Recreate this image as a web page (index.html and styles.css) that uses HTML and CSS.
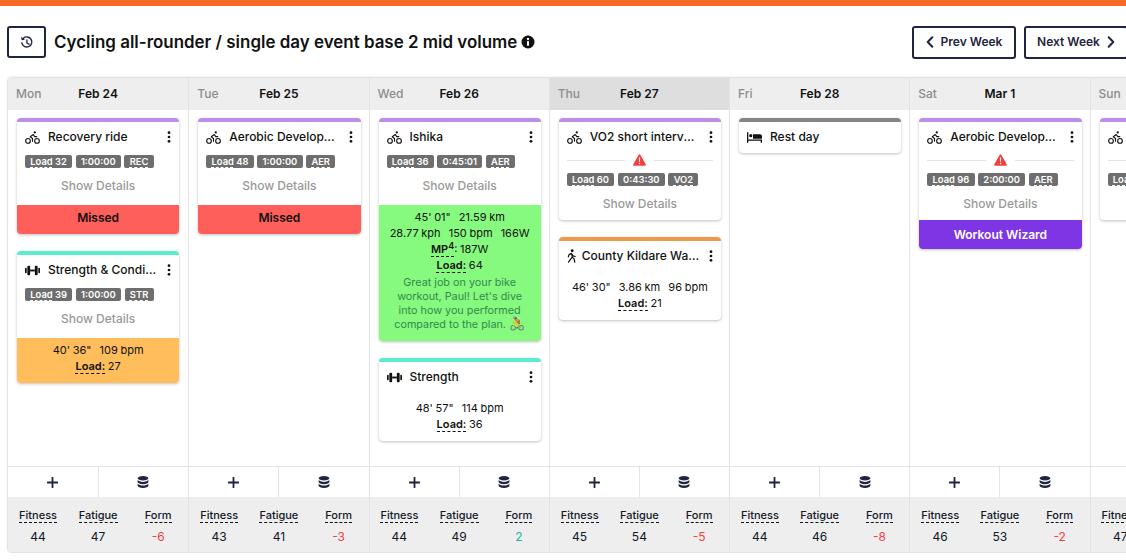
FILE: index.html
```html
<!DOCTYPE html>
<html lang="en">
<head>
<meta charset="utf-8">
<title>Calendar</title>
<link rel="stylesheet" href="styles.css">
</head>
<body>
<svg class="defs" width="0" height="0" aria-hidden="true">
  <symbol id="i-bike" viewBox="0 0 16 16"><g fill="none" stroke="currentColor" stroke-width="1.2" stroke-linecap="round" stroke-linejoin="round"><circle cx="3.2" cy="11.6" r="2.5"/><circle cx="12.8" cy="11.6" r="2.5"/><path d="M8 12V9L5.6 7.2 8.8 4.8l1.6 2.2h2.2"/></g><circle cx="10.4" cy="2.6" r="1.2" fill="currentColor"/></symbol>
  <symbol id="i-dumbbell" viewBox="0 0 16 16"><g fill="currentColor"><rect x="0" y="5" width="1.8" height="6" rx=".8"/><rect x="2.500" y="3" width="3" height="10" rx="1.100"/><rect x="5.500" y="7" width="5" height="2"/><rect x="10.500" y="3" width="3" height="10" rx="1.100"/><rect x="14.200" y="5" width="1.8" height="6" rx=".8"/></g></symbol>
  <symbol id="i-walk" viewBox="3 0 10 16"><circle cx="8.8" cy="2" r="1.6" fill="currentColor"/><path d="M8 5 5.2 6.4 4.4 9M8 5l.9 4.4 2 1.6.9 4M8.9 9.4 7 11.6 4.6 15M8.4 6l1.4 1.8 2.400.8" fill="none" stroke="currentColor" stroke-width="1.4" stroke-linecap="round" stroke-linejoin="round"/></symbol>
  <symbol id="i-bed" viewBox="0 0 16 16"><path fill="currentColor" d="M0 2.5h1.4V10h14.6v3.5h-1.4V11.5H1.4v2H0z"/><circle cx="4" cy="6" r="1.7" fill="currentColor"/><path fill="currentColor" d="M6.4 4.4h7.4A2.2 2.2 0 0 1 16 6.600V9.300H6.400z"/></symbol>
  <symbol id="i-dots" viewBox="0 0 4 14"><g fill="currentColor"><circle cx="2" cy="2" r="1.600"/><circle cx="2" cy="7" r="1.600"/><circle cx="2" cy="12" r="1.600"/></g></symbol>
  <symbol id="i-warn" viewBox="0 0 14 13"><path fill="#f43f3f" d="M7 .4c.4 0 .8.2 1 .6l5.700 10c.4.700-.1 1.600-1 1.600H1.300c-.9 0-1.400-.9-1-1.600L6 1c.2-.4.600-.6 1-.6z"/><path fill="#fff" d="M6.300 3.800h1.400l-.2 4.700H6.500z"/><circle cx="7" cy="10.200" r=".85" fill="#fff"/></symbol>
  <symbol id="i-db" viewBox="0 0 12 12"><g fill="currentColor"><ellipse cx="6" cy="2.300" rx="5.400" ry="2.200"/><path d="M.6 4.100c1 1.200 3.200 1.800 5.400 1.800s4.400-.6 5.400-1.800v1.900c0 1.200-2.400 2.200-5.400 2.200S.6 7.200.6 6z"/><path d="M.6 7.800C1.600 9 3.800 9.600 6 9.600s4.400-.6 5.400-1.800v1.900c0 1.200-2.400 2.200-5.400 2.200S.6 10.900.6 9.700z"/></g></symbol>
  <symbol id="i-plus" viewBox="0 0 12 12"><path d="M6 .8v10.400M.8 6h10.400" fill="none" stroke="currentColor" stroke-width="2" stroke-linecap="round"/></symbol>
</svg>

<div class="topbar"></div>

<header class="page-head">
  <button class="btn btn-history" type="button" aria-label="History">
    <svg class="ico-history" viewBox="0 0 16 16"><path d="M4.700 3.400A5.400 5.400 0 1 1 3 8.400" fill="none" stroke="currentColor" stroke-width="1.500" stroke-linecap="round"/><path d="M2.300 1.800 2.800 5.500 6.400 5z" fill="currentColor"/><path d="M8.400 5.200v3.300l2.300 1.300" fill="none" stroke="currentColor" stroke-width="1.400" stroke-linecap="round" stroke-linejoin="round"/></svg>
  </button>
  <h1 class="page-title">Cycling all-rounder / single day event base 2 mid volume</h1>
  <svg class="ico-info" viewBox="0 0 14 14"><circle cx="7" cy="7" r="6.500" fill="#111"/><rect x="6" y="6" width="2" height="4.800" rx=".5" fill="#fff"/><circle cx="7" cy="4" r="1.150" fill="#fff"/></svg>
  <nav class="week-nav">
    <button class="btn btn-week" type="button"><svg class="chev" viewBox="0 0 8 12"><path d="M6.300 1.300 1.700 6l4.600 4.700" fill="none" stroke="currentColor" stroke-width="2" stroke-linecap="round" stroke-linejoin="round"/></svg>Prev Week</button>
    <button class="btn btn-week" type="button">Next Week<svg class="chev" viewBox="0 0 8 12"><path d="M1.700 1.300 6.300 6l-4.600 4.700" fill="none" stroke="currentColor" stroke-width="2" stroke-linecap="round" stroke-linejoin="round"/></svg></button>
  </nav>
</header>

<main class="calendar">

  <section class="day">
    <div class="day-head"><span class="day-name">Mon</span><span class="day-date">Feb 24</span></div>
    <div class="day-body">
      <article class="card accent-purple">
        <div class="card-title"><svg class="sport"><use href="#i-bike"/></svg><span class="name">Recovery ride</span><svg class="dots"><use href="#i-dots"/></svg></div>
        <div class="tags"><span class="tag"><u>Load</u> 32</span><span class="tag">1:00:00</span><span class="tag"><u>REC</u></span></div>
        <div class="details">Show Details</div>
        <div class="status missed">Missed</div>
      </article>
      <article class="card accent-teal">
        <div class="card-title"><svg class="sport"><use href="#i-dumbbell"/></svg><span class="name">Strength &amp; Conditioning</span><svg class="dots"><use href="#i-dots"/></svg></div>
        <div class="tags"><span class="tag"><u>Load</u> 39</span><span class="tag">1:00:00</span><span class="tag"><u>STR</u></span></div>
        <div class="details">Show Details</div>
        <div class="result partial"><div>40' 36"&nbsp;&nbsp; 109 bpm</div><div><b class="dashed">Load:</b> 27</div></div>
      </article>
    </div>
    <div class="day-actions"><button class="act" type="button"><svg class="plus"><use href="#i-plus"/></svg></button><button class="act" type="button"><svg class="db"><use href="#i-db"/></svg></button></div>
    <div class="stats"><div class="stat"><span class="stat-label">Fitness</span><span>44</span></div><div class="stat"><span class="stat-label">Fatigue</span><span>47</span></div><div class="stat"><span class="stat-label">Form</span><span class="neg">-6</span></div></div>
  </section>

  <section class="day">
    <div class="day-head"><span class="day-name">Tue</span><span class="day-date">Feb 25</span></div>
    <div class="day-body">
      <article class="card accent-purple">
        <div class="card-title"><svg class="sport"><use href="#i-bike"/></svg><span class="name">Aerobic Development</span><svg class="dots"><use href="#i-dots"/></svg></div>
        <div class="tags"><span class="tag"><u>Load</u> 48</span><span class="tag">1:00:00</span><span class="tag"><u>AER</u></span></div>
        <div class="details">Show Details</div>
        <div class="status missed">Missed</div>
      </article>
    </div>
    <div class="day-actions"><button class="act" type="button"><svg class="plus"><use href="#i-plus"/></svg></button><button class="act" type="button"><svg class="db"><use href="#i-db"/></svg></button></div>
    <div class="stats"><div class="stat"><span class="stat-label">Fitness</span><span>43</span></div><div class="stat"><span class="stat-label">Fatigue</span><span>41</span></div><div class="stat"><span class="stat-label">Form</span><span class="neg">-3</span></div></div>
  </section>

  <section class="day">
    <div class="day-head"><span class="day-name">Wed</span><span class="day-date">Feb 26</span></div>
    <div class="day-body">
      <article class="card accent-purple">
        <div class="card-title"><svg class="sport"><use href="#i-bike"/></svg><span class="name">Ishika</span><svg class="dots"><use href="#i-dots"/></svg></div>
        <div class="tags"><span class="tag"><u>Load</u> 36</span><span class="tag">0:45:01</span><span class="tag"><u>AER</u></span></div>
        <div class="details">Show Details</div>
        <div class="result done">
          <div>45' 01"&nbsp;&nbsp; 21.59 km</div>
          <div>28.77 kph&nbsp;&nbsp; 150 bpm&nbsp;&nbsp; 166W</div>
          <div><b class="dashed">MP<sup>4</sup></b>: 187W</div>
          <div><b class="dashed">Load:</b> 64</div>
          <p class="comment">Great job on your bike workout, Paul! Let's dive into how you performed compared to the plan. <span class="emoji">🚴</span></p>
        </div>
      </article>
      <article class="card accent-teal">
        <div class="card-title"><svg class="sport"><use href="#i-dumbbell"/></svg><span class="name">Strength</span><svg class="dots"><use href="#i-dots"/></svg></div>
        <div class="result plain"><div>48' 57"&nbsp;&nbsp; 114 bpm</div><div><b class="dashed">Load:</b> 36</div></div>
      </article>
    </div>
    <div class="day-actions"><button class="act" type="button"><svg class="plus"><use href="#i-plus"/></svg></button><button class="act" type="button"><svg class="db"><use href="#i-db"/></svg></button></div>
    <div class="stats"><div class="stat"><span class="stat-label">Fitness</span><span>44</span></div><div class="stat"><span class="stat-label">Fatigue</span><span>49</span></div><div class="stat"><span class="stat-label">Form</span><span class="pos">2</span></div></div>
  </section>

  <section class="day today">
    <div class="day-head"><span class="day-name">Thu</span><span class="day-date">Feb 27</span></div>
    <div class="day-body">
      <article class="card accent-purple">
        <div class="card-title"><svg class="sport"><use href="#i-bike"/></svg><span class="name">VO2 short intervals progressive</span><svg class="dots"><use href="#i-dots"/></svg></div>
        <div class="warn-row"><svg class="warn"><use href="#i-warn"/></svg></div>
        <div class="tags tight"><span class="tag"><u>Load</u> 60</span><span class="tag">0:43:30</span><span class="tag"><u>VO2</u></span></div>
        <div class="details">Show Details</div>
      </article>
      <article class="card accent-orange">
        <div class="card-title"><svg class="sport sport-walk"><use href="#i-walk"/></svg><span class="name">County Kildare Walking Tour</span><svg class="dots"><use href="#i-dots"/></svg></div>
        <div class="result plain"><div>46' 30"&nbsp;&nbsp; 3.86 km&nbsp;&nbsp; 96 bpm</div><div><b class="dashed">Load:</b> 21</div></div>
      </article>
    </div>
    <div class="day-actions"><button class="act" type="button"><svg class="plus"><use href="#i-plus"/></svg></button><button class="act" type="button"><svg class="db"><use href="#i-db"/></svg></button></div>
    <div class="stats"><div class="stat"><span class="stat-label">Fitness</span><span>45</span></div><div class="stat"><span class="stat-label">Fatigue</span><span>54</span></div><div class="stat"><span class="stat-label">Form</span><span class="neg">-5</span></div></div>
  </section>

  <section class="day">
    <div class="day-head"><span class="day-name">Fri</span><span class="day-date">Feb 28</span></div>
    <div class="day-body">
      <article class="card accent-gray rest">
        <div class="card-title"><svg class="sport"><use href="#i-bed"/></svg><span class="name">Rest day</span></div>
      </article>
    </div>
    <div class="day-actions"><button class="act" type="button"><svg class="plus"><use href="#i-plus"/></svg></button><button class="act" type="button"><svg class="db"><use href="#i-db"/></svg></button></div>
    <div class="stats"><div class="stat"><span class="stat-label">Fitness</span><span>44</span></div><div class="stat"><span class="stat-label">Fatigue</span><span>46</span></div><div class="stat"><span class="stat-label">Form</span><span class="neg">-8</span></div></div>
  </section>

  <section class="day">
    <div class="day-head"><span class="day-name">Sat</span><span class="day-date">Mar 1</span></div>
    <div class="day-body">
      <article class="card accent-purple">
        <div class="card-title"><svg class="sport"><use href="#i-bike"/></svg><span class="name">Aerobic Development</span><svg class="dots"><use href="#i-dots"/></svg></div>
        <div class="warn-row"><svg class="warn"><use href="#i-warn"/></svg></div>
        <div class="tags tight"><span class="tag"><u>Load</u> 96</span><span class="tag">2:00:00</span><span class="tag"><u>AER</u></span></div>
        <div class="details">Show Details</div>
        <div class="status wizard">Workout Wizard</div>
      </article>
    </div>
    <div class="day-actions"><button class="act" type="button"><svg class="plus"><use href="#i-plus"/></svg></button><button class="act" type="button"><svg class="db"><use href="#i-db"/></svg></button></div>
    <div class="stats"><div class="stat"><span class="stat-label">Fitness</span><span>46</span></div><div class="stat"><span class="stat-label">Fatigue</span><span>53</span></div><div class="stat"><span class="stat-label">Form</span><span class="neg">-2</span></div></div>
  </section>

  <section class="day">
    <div class="day-head"><span class="day-name">Sun</span><span class="day-date">Mar 2</span></div>
    <div class="day-body">
      <article class="card accent-purple">
        <div class="card-title"><svg class="sport"><use href="#i-bike"/></svg><span class="name">Aerobic Development</span><svg class="dots"><use href="#i-dots"/></svg></div>
        <div class="warn-row"><svg class="warn"><use href="#i-warn"/></svg></div>
        <div class="tags tight"><span class="tag"><u>Load</u> 60</span><span class="tag">1:00:00</span><span class="tag"><u>AER</u></span></div>
        <div class="details">Show Details</div>
      </article>
    </div>
    <div class="day-actions"><button class="act" type="button"><svg class="plus"><use href="#i-plus"/></svg></button><button class="act" type="button"><svg class="db"><use href="#i-db"/></svg></button></div>
    <div class="stats"><div class="stat"><span class="stat-label">Fitness</span><span>47</span></div><div class="stat"><span class="stat-label">Fatigue</span><span>52</span></div><div class="stat"><span class="stat-label">Form</span><span class="neg">-5</span></div></div>
  </section>

</main>
</body>
</html>
```

FILE: styles.css
```css
* { box-sizing: border-box; }

html, body {
  margin: 0;
  height: 560px;
  overflow: hidden;
  background: #fff;
}

body {
  font-family: Inter, "Liberation Sans", sans-serif;
  font-size: 12px;
  line-height: 16px;
  color: #111827;
}

.defs { display: block; height: 0; }

.topbar {
  height: 6px;
  background: #f96a26;
}

.page-head {
  display: flex;
  align-items: center;
  width: 1128px;
  height: 71px;
  padding: 0 0 0 7px;
}

.btn {
  display: inline-flex;
  align-items: center;
  justify-content: center;
  background: #fff;
  border: 2px solid #1f2540;
  border-radius: 3px;
  color: #1f2540;
  font: 600 12px/16px Inter, "Liberation Sans", sans-serif;
  padding: 0;
}

.btn-history { width: 39px; height: 32px; margin-top: 1px; }
.ico-history { width: 15px; height: 15px; color: #1f2540; }

.page-title {
  margin: 0 0 0 8px;
  font-size: 16.950px;
  line-height: 24px;
  font-weight: 600;
  color: #111;
  white-space: nowrap;
}

.ico-info { width: 14px; height: 14px; margin-left: 4px; flex: none; }

.week-nav {
  display: flex;
  gap: 8px;
  margin-left: auto;
}

.btn-week { width: 104px; height: 33px; gap: 7px; margin-top: 1px; }
.chev { width: 8px; height: 12px; }

.calendar {
  display: flex;
  width: 1270px;
  height: 476px;
  margin-left: 7px;
  border: 1px solid #e3e3e3;
  border-radius: 4px;
  box-shadow: 0 -1px 2px rgba(0, 0, 0, .05);
}

.day {
  flex: 0 0 180.250px;
  min-width: 0;
  display: flex;
  flex-direction: column;
  border-right: 1px solid #e3e3e3;
}

.day:first-child { flex-basis: 181.250px; }

.day-head {
  display: grid;
  grid-template-columns: 1fr auto 1fr;
  align-items: center;
  height: 32px;
  padding: 0 8px;
  background: #eeeeee;
}

.today .day-head { background: #dedede; }

.day-name { color: #8c8c8c; font-weight: 500; }
.day-date { font-weight: 600; color: #111; }

.day-body {
  flex: 1;
  display: flex;
  flex-direction: column;
  gap: 17px;
  padding: 8px 8px 0 9px;
  min-height: 0;
}

.day:first-child .day-body { padding-right: 9px; }

.card {
  background: #fff;
  border-top: 4px solid #bb8fe9;
  border-radius: 4px;
  box-shadow: 0 1px 3px rgba(0, 0, 0, .25);
  overflow: hidden;
}

.accent-teal { border-top-color: #5beccf; }
.accent-orange { border-top-color: #ef9a47; }
.accent-gray { border-top-color: #858585; }

.card-title {
  display: flex;
  align-items: center;
  height: 14px;
  margin: 8px 8px 0;
  font-weight: 500;
  color: #111;
}

.sport { width: 15px; height: 15px; flex: none; margin-right: 8px; color: #111; }
.sport-walk { width: 9px; height: 14px; margin-right: 6px; }

.name {
  flex: 1;
  min-width: 0;
  overflow: hidden;
  white-space: nowrap;
  text-overflow: ellipsis;
}

.dots { width: 4px; height: 12px; flex: none; margin-left: 8px; color: #111; }

.rest { padding-bottom: 9px; }

.tags {
  display: flex;
  gap: 3.500px;
  margin: 11px 8px 0;
}

.tags.tight { margin-top: 7px; }

.tag {
  height: 13px;
  padding: 0 5.300px;
  overflow: hidden;
  background: #6e6e6e;
  border-radius: 2px;
  color: #fff;
  font-size: 9.400px;
  font-weight: 600;
  line-height: 13px;
  white-space: nowrap;
}

.tag u { text-decoration: underline dashed 1px; text-underline-offset: 2px; }

.details {
  margin-top: 10px;
  padding-bottom: 11px;
  color: #999;
  font-weight: 500;
  text-align: center;
}

.tags.tight + .details { padding-bottom: 8px; }

.warn-row {
  display: flex;
  align-items: center;
  gap: 8px;
  margin: 10px 8px 0;
  height: 12px;
}

.warn-row::before, .warn-row::after {
  content: "";
  flex: 1;
  height: 1px;
  background: #e3e3e3;
}

.warn { width: 13px; height: 12px; flex: none; }

.status {
  text-align: center;
  color: #111;
  font-weight: 600;
}

.missed { height: 29px; padding-top: 5px; background: #fe5f5a; }
.wizard { height: 29px; padding-top: 7px; background: #7e35e4; color: #fff; }

.result {
  padding: 4px 6px 9px;
  font-size: 11px;
  font-weight: 400;
  word-spacing: -.4px;
  text-align: center;
  color: #111;
}

.partial { background: #ffbd5c; }
.done { background: #86f97f; }
.plain { padding-top: 16px; }

.dashed {
  font-weight: 600;
  border-bottom: 1px dashed #111;
}

sup {
  font-size: 9px;
  line-height: 0;
  vertical-align: 4px;
}

.comment {
  margin: 3px 6px 0;
  color: #328a4c;
  font-size: 10.800px;
  line-height: 14px;
  word-spacing: 0;
}

.emoji { font-size: 13px; line-height: 0; }

.day-actions {
  display: flex;
  height: 31px;
  border-top: 1px solid #e3e3e3;
  flex: none;
}

.act {
  flex: 1;
  display: flex;
  align-items: center;
  justify-content: center;
  background: #fff;
  border: 0;
  padding: 0;
  color: #1f2540;
}

.act + .act { border-left: 1px solid #e3e3e3; }

.plus { width: 11px; height: 11px; }
.db { width: 12px; height: 12px; }

.stats {
  display: grid;
  grid-template-columns: repeat(3, 1fr);
  flex: none;
  height: 55px;
  padding: 11px 0 0;
  background: #eeeeee;
}

.stat {
  display: flex;
  flex-direction: column;
  align-items: center;
  gap: 6px;
}

.stat-label {
  font-size: 11px;
  line-height: 14px;
  font-weight: 500;
  border-bottom: 1px dashed #111;
}

.neg { color: #f43f3f; }
.pos { color: #10b59b; }
```
